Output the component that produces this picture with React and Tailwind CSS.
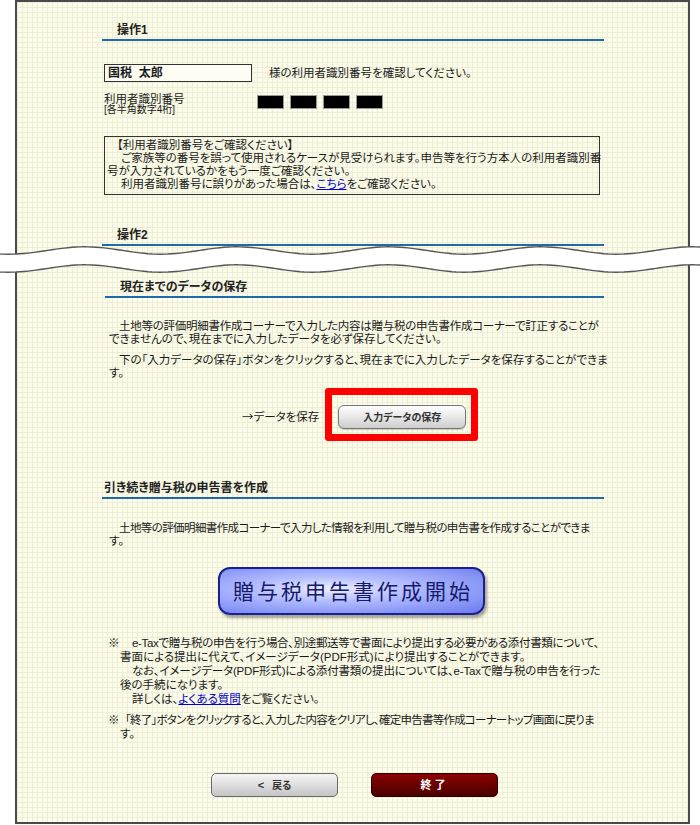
import React from 'react';

// 画面の途中を省略している波線（上下2本、間は白）
function wavePts(c, amp, from, to) {
  const pts = [];
  for (let x = from; x <= to; x += 4) {
    pts.push([x, c - amp * Math.cos((2 * Math.PI * (x - 85)) / 152)]);
  }
  return pts;
}

function Break() {
  const top = 238;
  const a = wavePts(250.5 - top, 3.7, -4, 704);
  const b = wavePts(268.5 - top, 3.7, -4, 704);
  const line = (p) => p.map(([x, y], i) => `${i ? 'L' : 'M'}${x} ${y.toFixed(2)}`).join(' ');
  const fill =
    line(a) +
    ' ' +
    b
      .slice()
      .reverse()
      .map(([x, y]) => `L${x} ${y.toFixed(2)}`)
      .join(' ') +
    ' Z';
  return (
    <svg className="pointer-events-none absolute left-0 top-[238px]" width="700" height="48" viewBox="0 0 700 48">
      <path d={fill} fill="#fff" />
      <path d={line(a)} fill="none" stroke="#555" strokeWidth="1.4" />
      <path d={line(b)} fill="none" stroke="#555" strokeWidth="1.4" />
    </svg>
  );
}

function Heading({ children, className = '' }) {
  return (
    <div className={`border-b-2 border-[#1f6aa8] pb-[2px] text-[12px] font-bold leading-[14px] text-[#222] ${className}`}>
      {children}
    </div>
  );
}

export default function App() {
  return (
    <div className="relative h-[825px] w-[700px] overflow-hidden bg-white font-['Liberation_Sans','Noto_Sans_CJK_JP',sans-serif] text-[11.5px] leading-[13px] text-[#1a1a1a] [font-feature-settings:'palt']">
      <div className="ml-[15px] h-[824px] w-[675px] border-2 border-[#4a4a4a] bg-[#fcfcea] bg-[linear-gradient(#eeeed6_1px,transparent_1px),linear-gradient(90deg,#eeeed6_1px,transparent_1px)] bg-size-[5px_5px] pl-[85px] pt-[21px]">
        <div className="w-[502px]">
          {/* 操作1 */}
          <Heading className="pl-[15px]">操作1</Heading>

          <div className="mt-[23px] flex items-center pl-[2px]">
            <div className="h-[18px] w-[148px] border border-[#333] bg-[#fdfdf3] pl-[3px] text-[12px] font-bold leading-[16px]">
              国税&nbsp;&nbsp;太郎
            </div>
            <span className="ml-[17px]">様の利用者識別番号を確認してください。</span>
          </div>

          <div className="mt-[11px] flex pl-[2px]">
            <div className="w-[153px]">
              <div className="leading-[12px]">利用者識別番号</div>
              <div className="text-[10px] leading-[10px]">[各半角数字4桁]</div>
            </div>
            <div className="mt-[2px] flex gap-[6px]">
              <div className="h-[14px] w-[27px] border border-[#9a9a9a] bg-black" />
              <div className="h-[14px] w-[27px] border border-[#9a9a9a] bg-black" />
              <div className="h-[14px] w-[27px] border border-[#9a9a9a] bg-black" />
              <div className="h-[14px] w-[27px] border border-[#9a9a9a] bg-black" />
            </div>
          </div>

          <div className="ml-[2px] mt-[21px] w-[496px] border border-[#333] px-[2px] pb-[3px] pt-[2px]">
            <div className="whitespace-nowrap pl-[10px]">【利用者識別番号をご確認ください】</div>
            <div className="whitespace-nowrap pl-[14px]">
              ご家族等の番号を誤って使用されるケースが見受けられます。申告等を行う方本人の利用者識別番
            </div>
            <div className="whitespace-nowrap">号が入力されているかをもう一度ご確認ください。</div>
            <div className="whitespace-nowrap pl-[14px]">
              利用者識別番号に誤りがあった場合は、<span className="text-[#0000cc] underline">こちら</span>をご確認ください。
            </div>
          </div>

          {/* 操作2 */}
          <Heading className="mt-[33px] pl-[15px]">操作2</Heading>

          <Heading className="ml-[3px] mt-[34px] pl-[15px]">現在までのデータの保存</Heading>

          <div className="mt-[22px] pl-[7px]">
            <div className="whitespace-nowrap pl-[10px] tracking-[-0.27px]">
              土地等の評価明細書作成コーナーで入力した内容は贈与税の申告書作成コーナーで訂正することが
            </div>
            <div className="whitespace-nowrap">できませんので、現在までに入力したデータを必ず保存してください。</div>
          </div>
          <div className="mt-[8px] pl-[7px]">
            <div className="whitespace-nowrap pl-[10px]">
              下の「入力データの保存」ボタンをクリックすると、現在までに入力したデータを保存することができま
            </div>
            <div className="whitespace-nowrap">す。</div>
          </div>

          <div className="mt-[8px] flex items-center pl-[140px]">
            <span className="mt-[5px]">
              <span className="font-['Noto_Sans_CJK_JP',sans-serif]">→</span>データを保存
            </span>
            <div className="ml-[6px] rounded-[3px] border-[7px] border-[#ff0000] pb-[5px] pl-[6px] pr-[5px] pt-[10px]">
              <div className="flex h-[24px] w-[128px] items-center justify-center rounded-[6px] border border-[#777] bg-[linear-gradient(#ffffff,#e8e8e8_50%,#cdcdcd)] text-[10px] font-bold text-[#333] shadow-[0_1px_1px_rgba(0,0,0,0.2)]">
                入力データの保存
              </div>
            </div>
          </div>

          <Heading className="mt-[40px] pl-[2px]">引き続き贈与税の申告書を作成</Heading>

          <div className="mt-[23px] pl-[7px]">
            <div className="whitespace-nowrap pl-[10px] tracking-[-0.6px]">
              土地等の評価明細書作成コーナーで入力した情報を利用して贈与税の申告書を作成することができま
            </div>
            <div className="whitespace-nowrap">す。</div>
          </div>

          <div className="ml-[116px] mt-[19px] flex h-[48px] w-[267px] items-center justify-center rounded-[12px] border-2 border-[#1c1f8f] bg-[radial-gradient(ellipse_at_42%_45%,#eef0ff_0%,#b4beff_35%,#6a7aee_100%)] pl-[3px] text-[21px] tracking-[3px] text-[#161a6e] shadow-[2px_3px_3px_rgba(0,0,0,0.35)]">
            贈与税申告書作成開始
          </div>

          {/* 注意書き */}
          <div className="mt-[21px] flex pl-[6px] leading-[14px]">
            <span className="w-[12px] shrink-0">※</span>
            <div>
              <div className="whitespace-nowrap pl-[12px] tracking-[-0.34px]">
                e-Taxで贈与税の申告を行う場合、別途郵送等で書面により提出する必要がある添付書類について、
              </div>
              <div className="whitespace-nowrap">書面による提出に代えて、イメージデータ(PDF形式)により提出することができます。</div>
              <div className="whitespace-nowrap pl-[12px] tracking-[-0.18px]">
                なお、イメージデータ(PDF形式)による添付書類の提出については、e-Taxで贈与税の申告を行った
              </div>
              <div className="whitespace-nowrap">後の手続になります。</div>
              <div className="whitespace-nowrap pl-[12px]">
                詳しくは、<span className="text-[#0000cc] underline">よくある質問</span>をご覧ください。
              </div>
            </div>
          </div>
          <div className="mt-[7px] flex pl-[6px] leading-[14px]">
            <span className="w-[12px] shrink-0">※</span>
            <div>
              <div className="whitespace-nowrap pl-[5px] tracking-[-0.75px]">
                「終了」ボタンをクリックすると、入力した内容をクリアし、確定申告書等作成コーナートップ画面に戻りま
              </div>
              <div className="whitespace-nowrap">す。</div>
            </div>
          </div>

          <div className="mt-[32px] flex gap-[33px] pl-[109px]">
            <div className="flex h-[24px] w-[127px] items-center justify-center rounded-[5px] border border-[#6b6b6b] bg-[linear-gradient(#f6f6f6,#dedede_50%,#c4c4c4)] text-[10px] font-bold text-[#333]">
              <span className="mr-[8px] text-[11px]">&lt;</span>戻る
            </div>
            <div className="flex h-[24px] w-[127px] items-center justify-center rounded-[5px] border border-[#2a0000] bg-[linear-gradient(#8c0000,#6a0000_50%,#4a0000)] text-[11px] font-bold tracking-[3px] text-white">
              終了
            </div>
          </div>
        </div>
      </div>
      <Break />
    </div>
  );
}
